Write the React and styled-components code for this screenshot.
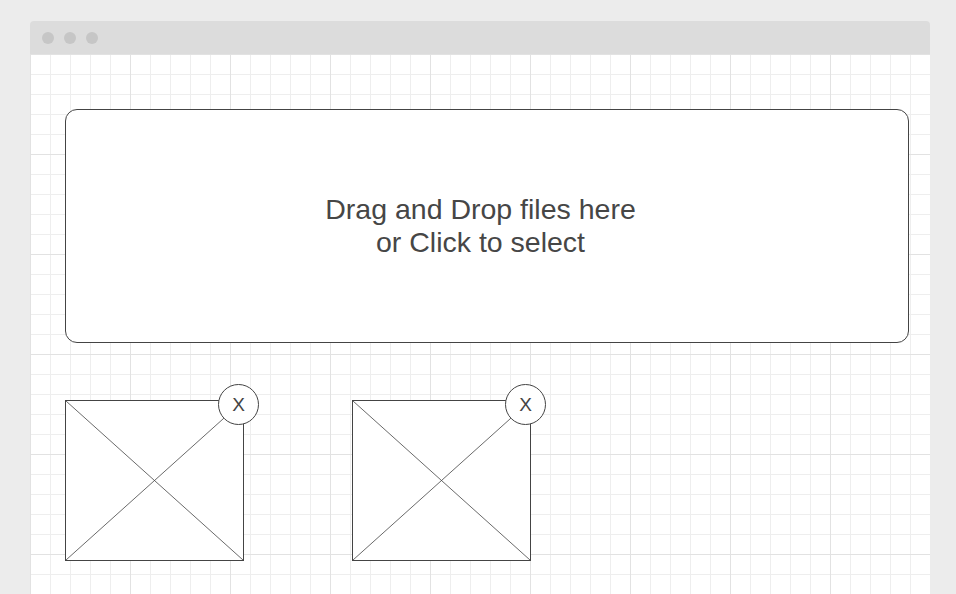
import React from 'react';
import styled, { createGlobalStyle } from 'styled-components';

const GlobalStyle = createGlobalStyle`
  html, body {
    margin: 0;
    padding: 0;
    background: #ececec;
    font-family: "Liberation Sans", Arial, sans-serif;
    overflow: hidden;
  }
`;

const Window = styled.div`
  margin: 21px 26px 0 30px;
  width: 900px;
  height: 580px;
  display: flex;
  flex-direction: column;
`;

const TitleBar = styled.div`
  height: 33px;
  background: #dcdcdc;
  border-radius: 4px 4px 0 0;
  display: flex;
  align-items: center;
  gap: 10px;
  padding-left: 12px;
  box-sizing: border-box;
`;

const Dot = styled.span`
  width: 12px;
  height: 12px;
  border-radius: 50%;
  background: #c6c6c6;
`;

const Canvas = styled.div`
  flex: 1;
  background-color: #fff;
  background-image:
    linear-gradient(to right, #e2e2e2 1px, transparent 1px),
    linear-gradient(to bottom, #e2e2e2 1px, transparent 1px),
    linear-gradient(to right, #eeeeee 1px, transparent 1px),
    linear-gradient(to bottom, #eeeeee 1px, transparent 1px);
  background-size: 100px 100px, 100px 100px, 20px 20px, 20px 20px;
  padding: 55px 21px 0 35px;
  display: flex;
  flex-direction: column;
`;

const DropZone = styled.div`
  height: 234px;
  box-sizing: border-box;
  border: 1px solid #444;
  border-radius: 12px;
  background: #fff;
  padding-right: 13px;
  display: flex;
  flex-direction: column;
  align-items: center;
  justify-content: center;
  color: #464646;
  font-size: 28.5px;
  line-height: 33px;
  cursor: pointer;
`;

const Thumbs = styled.div`
  display: flex;
  gap: 108px;
  margin-top: 57px;
`;

const Thumb = styled.div`
  position: relative;
  width: 179px;
  height: 161px;
  box-sizing: border-box;
  border: 1px solid #444;
  background: #fff;

  svg {
    display: block;
    width: 100%;
    height: 100%;
  }
`;

const RemoveButton = styled.button`
  position: absolute;
  top: -17px;
  right: -16px;
  width: 41px;
  height: 41px;
  border-radius: 50%;
  border: 1px solid #444;
  background: #fff;
  color: #444;
  font-family: "Liberation Sans", Arial, sans-serif;
  font-size: 19px;
  padding: 0;
  display: flex;
  align-items: center;
  justify-content: center;
  cursor: pointer;
`;

const Placeholder = () => (
  <svg viewBox="0 0 177 159" preserveAspectRatio="none">
    <line x1="0" y1="0" x2="177" y2="159" stroke="#444" strokeWidth="0.8" />
    <line x1="177" y1="0" x2="0" y2="159" stroke="#444" strokeWidth="0.8" />
  </svg>
);

const files = ['image-1', 'image-2'];

const App = () => (
  <>
    <GlobalStyle />
    <Window>
      <TitleBar>
        <Dot />
        <Dot />
        <Dot />
      </TitleBar>
      <Canvas>
        <DropZone>
          <span>Drag and Drop files here</span>
          <span>or Click to select</span>
        </DropZone>
        <Thumbs>
          {files.map((f) => (
            <Thumb key={f}>
              <Placeholder />
              <RemoveButton>X</RemoveButton>
            </Thumb>
          ))}
        </Thumbs>
      </Canvas>
    </Window>
  </>
);

export default App;
